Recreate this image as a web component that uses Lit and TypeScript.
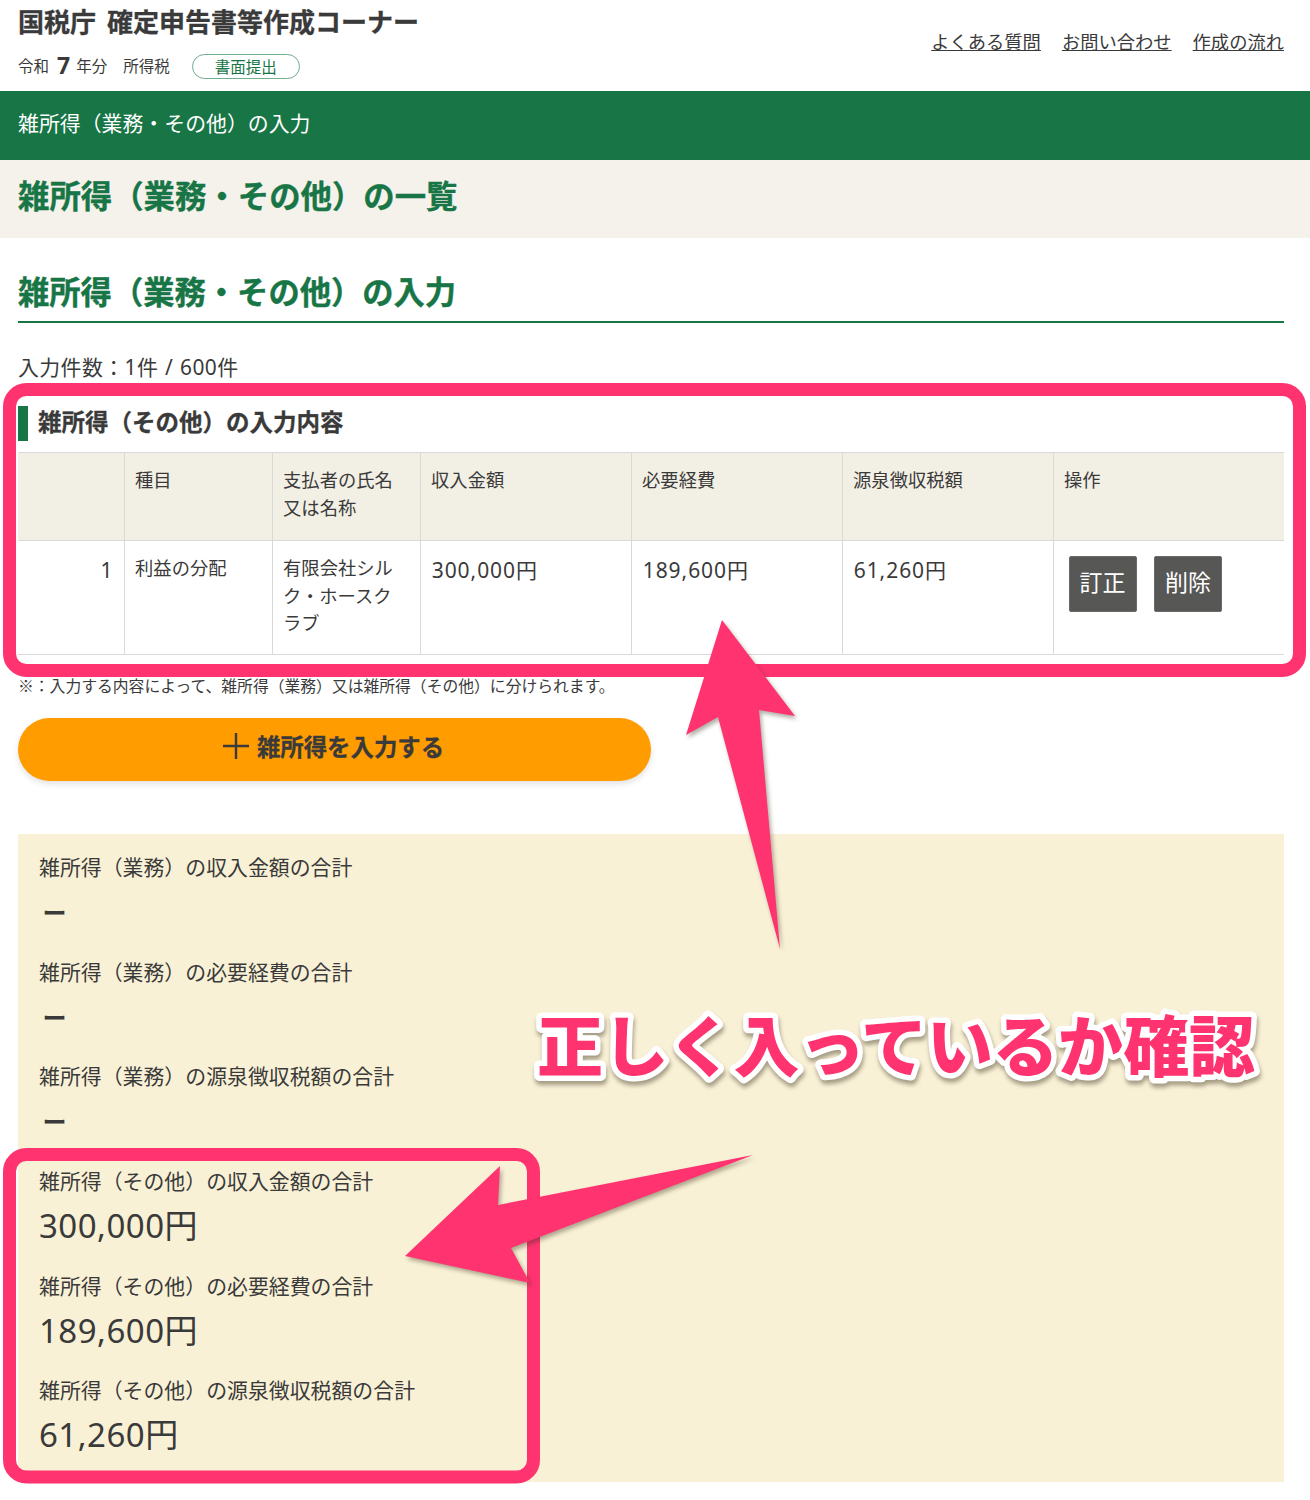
import { LitElement, html, css } from "lit";
import { customElement } from "lit/decorators.js";

interface Total { label: string; value: string; }
const totals: Total[] = [
  { label: "雑所得（業務）の収入金額の合計", value: "ー" },
  { label: "雑所得（業務）の必要経費の合計", value: "ー" },
  { label: "雑所得（業務）の源泉徴収税額の合計", value: "ー" },
  { label: "雑所得（その他）の収入金額の合計", value: "300,000円" },
  { label: "雑所得（その他）の必要経費の合計", value: "189,600円" },
  { label: "雑所得（その他）の源泉徴収税額の合計", value: "61,260円" },
];

@customElement("app-root")
export class AppRoot extends LitElement {
  static styles = css`
    :host { display: block; position: relative; width: 1310px; height: 1500px; overflow: hidden; background: #fff; color: #3a3a3a; font-family: "Noto Sans CJK JP", "Noto Sans", sans-serif; }
    * { box-sizing: border-box; }
    .top { height: 91px; display: flex; justify-content: space-between; padding: 0 26px 0 18px; }
    .brand { display: flex; flex-direction: column; }
    .brand h1 { margin: 4px 0 0; font-size: 26px; line-height: 33px; font-weight: 700; color: #3a3a3a; white-space: nowrap; word-spacing: 5px; -webkit-text-stroke: 0.3px #3a3a3a; }
    .meta { margin-top: 15px; display: flex; align-items: center; height: 26px; font-size: 15.5px; white-space: nowrap; }
    .meta b { font-family: "Noto Sans", sans-serif; font-size: 23px; margin: 0 6px 0 8px; line-height: 26px; }
    .meta .tax { margin-left: 16px; }
    .badge { margin-left: 22px; margin-top: 2px; width: 108px; height: 25px; border: 1px solid #6fae8f; border-radius: 13px; color: #187546; display: flex; align-items: center; justify-content: center; font-size: 15.5px; }
    .links { display: flex; gap: 21px; margin-top: 27px; font-size: 18.3px; line-height: 28px; }
    .links a { color: #3a3a3a; text-decoration: underline; }
    .crumb { height: 69px; background: #187546; color: #fff; font-size: 20.9px; line-height: 63px; padding-left: 18px; }
    .band { height: 78px; background: #f5f2eb; color: #187546; font-size: 31.4px; font-weight: 700; line-height: 70px; padding-left: 18px; -webkit-text-stroke: 0.4px #187546; }
    .main { padding: 0 26px 0 18px; }
    h2.sec { margin: 31px 0 0; height: 54px; border-bottom: 2px solid #187546; color: #187546; font-size: 31.3px; font-weight: 700; line-height: 44px; -webkit-text-stroke: 0.4px #187546; }
    .count { margin-top: 27px; font-size: 20.9px; line-height: 34px; font-family: "Noto Sans", "Noto Sans CJK JP", sans-serif; letter-spacing: 0.02em; word-spacing: 1px; white-space: nowrap; }
    h3.sub { margin: 22px 0 0; height: 35px; border-left: 10px solid #187546; padding-left: 10px; font-size: 23.5px; line-height: 30px; font-weight: 700; -webkit-text-stroke: 0.3px #3a3a3a; }
    table { margin-top: 11px; width: 1266px; table-layout: fixed; border-collapse: collapse; font-size: 18.3px; line-height: 27.5px; }
    th, td { border: 1px solid #d9d9d9; padding: 13px 10.6px; vertical-align: top; text-align: left; font-weight: 400; }
    tr > :first-child { border-left: none; }
    tr > :last-child { border-right: none; }
    th { background: #f2efe5; height: 88px; }
    td { height: 114px; }
    td.n { font-family: "Noto Sans", "Noto Sans CJK JP", sans-serif; font-size: 21px; letter-spacing: 0.045em; line-height: 31px; padding-top: 14px; padding-left: 11.2px; }
    td.idx { text-align: right; padding-right: 10px; }
    td.ops { padding: 15px 0 0 15px; }
    .ops div { display: flex; gap: 17.5px; }
    button { width: 68px; height: 56px; background: #575755; color: #fff; border: 1px solid #6a6a68; border-radius: 2px; font: 400 23px "Noto Sans CJK JP", sans-serif; padding: 0 0 6px; }
    .note { margin-top: 16px; font-size: 15.8px; line-height: 30px; height: 30px; white-space: nowrap; }
    .add { margin-top: 17px; width: 633px; height: 63px; border-radius: 32px; background: #ff9c00; box-shadow: 0 3px 6px rgba(0,0,0,.12); display: flex; align-items: center; justify-content: center; gap: 8px; padding: 0 2px 7px 0; font-size: 23.4px; font-weight: 700; color: #3a3a3a; -webkit-text-stroke: 0.3px #3a3a3a; }
    .add svg { display: block; }
    .panel { margin-top: 53px; height: 648px; background: #f9f1d6; padding: 15px 21px; }
    .tot { height: 104.7px; }
    .tot p { margin: 0; font-size: 20.9px; line-height: 34px; white-space: nowrap; }
    .tot div { margin-top: 2px; height: 54px; font-family: "Noto Sans", "Noto Sans CJK JP", sans-serif; font-size: 33px; letter-spacing: 0.015em; line-height: 54px; }
    .tot div.dash { font-size: 24px; font-weight: 700; padding: 1px 0 0 3.5px; }
    .over { position: absolute; left: 0; top: 0; width: 1310px; height: 1500px; pointer-events: none; }
    .frame { fill: none; stroke: #ff3370; stroke-width: 13; }
    .arrow { fill: #ff3370; filter: drop-shadow(2px 3px 2px rgba(60,50,30,.4)); }
    .shout { font-family: "Noto Sans CJK JP", sans-serif; font-size: 66px; font-weight: 900; fill: #ff3370; stroke: #fff; stroke-width: 11px; stroke-linejoin: round; paint-order: stroke fill; filter: drop-shadow(1px 4px 2px rgba(60,50,30,.45)); }
  `;

  render() {
    return html`
      <div class="top">
        <div class="brand">
          <h1>国税庁 確定申告書等作成コーナー</h1>
          <div class="meta">令和<b>7</b>年分<span class="tax">所得税</span><span class="badge">書面提出</span></div>
        </div>
        <nav class="links"><a>よくある質問</a><a>お問い合わせ</a><a>作成の流れ</a></nav>
      </div>
      <div class="crumb">雑所得（業務・その他）の入力</div>
      <div class="band">雑所得（業務・その他）の一覧</div>
      <div class="main">
        <h2 class="sec">雑所得（業務・その他）の入力</h2>
        <div class="count">入力件数：1件 / 600件</div>
        <h3 class="sub">雑所得（その他）の入力内容</h3>
        <table>
          <colgroup><col style="width:106px"/><col style="width:148px"/><col style="width:148px"/><col style="width:211px"/><col style="width:211px"/><col style="width:211px"/><col style="width:231px"/></colgroup>
          <thead><tr><th></th><th>種目</th><th>支払者の氏名<br />又は名称</th><th>収入金額</th><th>必要経費</th><th>源泉徴収税額</th><th>操作</th></tr></thead>
          <tbody><tr>
            <td class="n idx">1</td>
            <td>利益の分配</td>
            <td>有限会社シルク・ホースクラブ</td>
            <td class="n">300,000円</td>
            <td class="n">189,600円</td>
            <td class="n">61,260円</td>
            <td class="ops"><div><button>訂正</button><button>削除</button></div></td>
          </tr></tbody>
        </table>
        <div class="note">※：入力する内容によって、雑所得（業務）又は雑所得（その他）に分けられます。</div>
        <div class="add">
          <svg width="26" height="26" viewBox="0 0 26 26"><path d="M13 0V26M0 13H26" stroke="#3a3a3a" stroke-width="2.4" fill="none"/></svg>
          <span>雑所得を入力する</span>
        </div>
        <div class="panel">
          ${totals.map((t) => html`<div class="tot"><p>${t.label}</p><div class=${t.value === "ー" ? "dash" : ""}>${t.value}</div></div>`)}
        </div>
      </div>
      <svg class="over" viewBox="0 0 1310 1500">
        <rect class="frame" x="9.5" y="389.5" width="1290" height="281" rx="17" />
        <rect class="frame" x="9.5" y="1154.5" width="524" height="322.5" rx="17" />
        <polygon class="arrow" points="722,620 795,716 759,710 780,949 718,717 686,735" />
        <polygon class="arrow" points="753,1155 511,1248 530,1283 405,1256 500,1166 498,1205" />
        <text class="shout" x="537" y="1071" textLength="718" lengthAdjust="spacing">正しく入っているか確認</text>
      </svg>
    `;
  }
}
